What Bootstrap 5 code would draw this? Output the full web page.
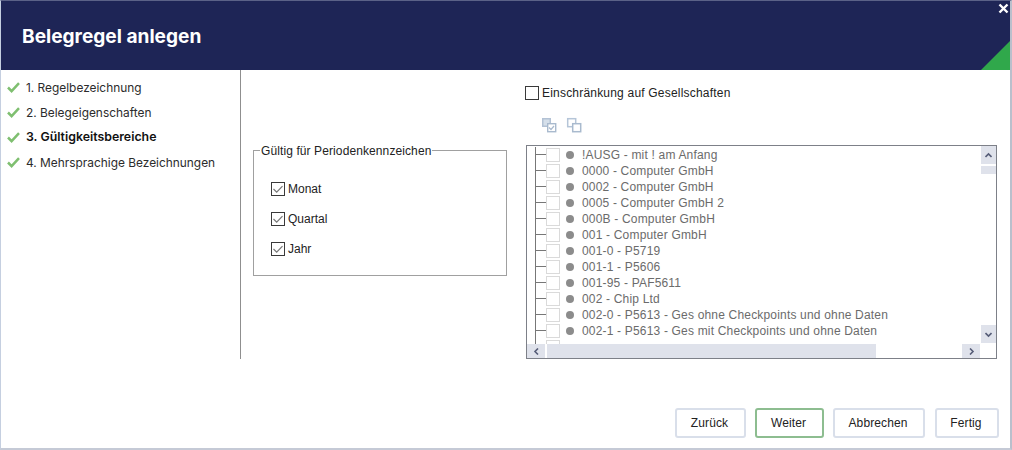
<!DOCTYPE html>
<html lang="de">
<head>
<meta charset="utf-8">
<link href="https://cdn.jsdelivr.net/npm/bootstrap@5.3.0/dist/css/bootstrap.min.css" rel="stylesheet">
<style>
html,body{margin:0;height:450px;overflow:hidden;background:#fff}
body{font-family:"Liberation Sans",Arial,sans-serif;font-size:12px;color:#222}
.dlg{width:1012px;height:450px;border:1px solid #c5cfe0;border-top-color:#5b6287;border-right:2px solid #b9bfcc;border-bottom:2px solid #c5cad6;background:#fff;display:flex;flex-direction:column}
.dlg-head{height:69px;background:#1e2556;flex:none;display:flex;align-items:center;padding-left:21px;overflow:hidden;position:relative}
.dlg-title{font-family:"Inter","Liberation Sans",sans-serif;font-weight:700;font-size:19.1px;color:#fff;margin:0;line-height:1;padding-top:2px}
.dlg-close{position:absolute;right:1px;top:2px;width:11px;height:11px;display:block}
.dlg-tri{position:absolute;right:0;bottom:0;width:29px;height:29px;display:block}
.dlg-body{height:289px;flex:none;display:flex}
.steps{width:240px;flex:none;border-right:1px solid #8f8f8f;padding-top:5px;height:289px;font-family:"Inter","Liberation Sans",sans-serif;font-size:11.9px;color:#2c2c2c}
.step{height:25px;display:flex;align-items:center;padding-left:6px;gap:6px}
.step.now{font-weight:600;color:#111;font-size:12.35px}
.mainp{flex:1;display:flex;min-width:0}
.leftp{width:272px;flex:none;padding:80px 0 0 12px}
.grpbox{width:254px;height:126px;border:1px solid #a0a0a0;margin:0;padding:0;display:flex;flex-direction:column;position:relative}
.grpcap{position:absolute;left:6px;top:-7px;background:#fff;padding:0 1px;font-size:12px;line-height:14px;color:#222;letter-spacing:.1px}
.opts{padding-top:30px;padding-left:17px;display:flex;flex-direction:column;gap:14px}
.opt{display:flex;align-items:center;gap:3px;height:16px;line-height:16px;font-size:12px}
.cbx{width:14px;height:14px;flex:none;display:block}
.rightp{flex:1;padding:16px 0 0 13px;min-width:0}
.restrict{display:flex;align-items:center;gap:3px;height:14px;line-height:14px;font-size:12px;margin:0 0 17px -1px;letter-spacing:.2px}
.tools{display:flex;gap:9px;height:16px;padding-left:15px;margin-bottom:12px}
.tools svg{width:16px;height:16px;display:block}
.treebox{width:471px;height:214px;border:1px solid #7d8088;position:relative;overflow:hidden;background:#fff}
.rows{padding-top:1px}
.trow{height:16px;display:flex;align-items:center;color:#6b6b6b;font-size:12px;line-height:16px;white-space:nowrap;letter-spacing:.18px}
.lnk{width:11px;height:16px;flex:none;margin-left:8px;position:relative;border-left:1px solid #777}
.lnk::after{content:"";position:absolute;left:0;right:0;top:7px;border-top:1px solid #777}
.bx{width:14px;height:14px;border:1px solid #dadada;flex:none;background:#fff}
.dot{width:8px;height:8px;border-radius:50%;background:#8c8c8c;flex:none;margin:0 8px 0 6px}
.sb{background:#dfe2eb;position:absolute;display:flex;align-items:center;justify-content:center}
.sb svg{width:7px;height:7px;display:block}
.sb-up{right:0;top:0;width:15px;height:18px}
.sb-thumb{right:0;top:20px;width:15px;height:8px}
.sb-dn{right:0;bottom:15px;width:15px;height:18px}
.sb-lf{left:0;bottom:0;width:18px;height:14px}
.sb-hthumb{left:20px;bottom:0;width:329px;height:14px}
.sb-rt{right:16px;bottom:0;width:18px;height:14px}
.sb-fill{right:0;left:0;bottom:0;height:14px;background:#fff}
.foot{flex:1;display:flex;justify-content:flex-end;align-items:flex-start;gap:9px;padding:49px 11px 0 0}
.fbtn{height:30px;padding:0 2px 0 0;border:2px solid #d9dfea;border-radius:3px;background:#fff;font-family:"Liberation Sans",Arial,sans-serif;font-size:12px;color:#222;line-height:1;letter-spacing:.1px;box-shadow:none}
.fbtn:hover{background:#fff;color:#222;border-color:#d9dfea}
.fbtn.def{border-color:#8dbd90}
.w-z{width:71px}.w-w{width:69px}.w-a{width:92px}.w-f{width:64px;margin-left:1px}
</style>
</head>
<body>
<div class="dlg">
  <div class="dlg-head">
    <h1 class="dlg-title">Belegregel anlegen</h1>
    <svg class="dlg-close" viewBox="0 0 11 11"><path d="M1.5 1.5l8 8M9.5 1.5l-8 8" stroke="#fff" stroke-width="2.4"/></svg>
    <svg class="dlg-tri" viewBox="0 0 29 29"><polygon points="29,0 29,29 0,29" fill="#30a84b"/></svg>
  </div>
  <div class="dlg-body">
    <div class="steps">
      <div class="step"><svg width="13" height="11" viewBox="0 0 13 11"><path d="M1 5.5l3.6 3.6L12 1.2" fill="none" stroke="#7fbf70" stroke-width="2.5"/></svg><span>1. Regelbezeichnung</span></div>
      <div class="step"><svg width="13" height="11" viewBox="0 0 13 11"><path d="M1 5.5l3.6 3.6L12 1.2" fill="none" stroke="#7fbf70" stroke-width="2.5"/></svg><span>2. Belegeigenschaften</span></div>
      <div class="step now"><svg width="13" height="11" viewBox="0 0 13 11"><path d="M1 5.5l3.6 3.6L12 1.2" fill="none" stroke="#7fbf70" stroke-width="2.5"/></svg><span>3. Gültigkeitsbereiche</span></div>
      <div class="step"><svg width="13" height="11" viewBox="0 0 13 11"><path d="M1 5.5l3.6 3.6L12 1.2" fill="none" stroke="#7fbf70" stroke-width="2.5"/></svg><span>4. Mehrsprachige Bezeichnungen</span></div>
    </div>
    <div class="mainp">
      <div class="leftp">
        <div class="grpbox">
          <span class="grpcap">Gültig für Periodenkennzeichen</span>
          <div class="opts">
            <div class="opt"><svg class="cbx" viewBox="0 0 14 14"><rect x=".5" y=".5" width="13" height="13" fill="#fff" stroke="#3a3a3a"/><path d="M2.5 7l3.2 3.2 5.8-6" fill="none" stroke="#777" stroke-width="1.2"/></svg><span>Monat</span></div>
            <div class="opt"><svg class="cbx" viewBox="0 0 14 14"><rect x=".5" y=".5" width="13" height="13" fill="#fff" stroke="#3a3a3a"/><path d="M2.5 7l3.2 3.2 5.8-6" fill="none" stroke="#777" stroke-width="1.2"/></svg><span>Quartal</span></div>
            <div class="opt"><svg class="cbx" viewBox="0 0 14 14"><rect x=".5" y=".5" width="13" height="13" fill="#fff" stroke="#3a3a3a"/><path d="M2.5 7l3.2 3.2 5.8-6" fill="none" stroke="#777" stroke-width="1.2"/></svg><span>Jahr</span></div>
          </div>
        </div>
      </div>
      <div class="rightp">
        <div class="restrict"><svg class="cbx" viewBox="0 0 14 14"><rect x=".5" y=".5" width="13" height="13" fill="#fff" stroke="#3a3a3a"/></svg><span>Einschränkung auf Gesellschaften</span></div>
        <div class="tools">
          <svg viewBox="0 0 16 16"><rect x="1" y="1" width="9" height="9" fill="#b3c2d5"/><rect x="2.5" y="2.5" width="6" height="6" fill="#d5dfea"/><rect x="6.7" y="6.7" width="8" height="8" fill="#fff" stroke="#a9bace" stroke-width="1.4"/><path d="M8 10.5l2 2 3-3.5" fill="none" stroke="#a9bace" stroke-width="1.2"/></svg>
          <svg viewBox="0 0 16 16"><rect x="1.7" y="1.7" width="8" height="8" fill="#fff" stroke="#b5c5d8" stroke-width="1.5"/><rect x="6.7" y="6.7" width="8" height="8" fill="#fff" stroke="#a9bace" stroke-width="1.5"/></svg>
        </div>
        <div class="treebox">
          <div class="rows">
            <div class="trow"><span class="lnk"></span><span class="bx"></span><span class="dot"></span>!AUSG - mit ! am Anfang</div>
            <div class="trow"><span class="lnk"></span><span class="bx"></span><span class="dot"></span>0000 - Computer GmbH</div>
            <div class="trow"><span class="lnk"></span><span class="bx"></span><span class="dot"></span>0002 - Computer GmbH</div>
            <div class="trow"><span class="lnk"></span><span class="bx"></span><span class="dot"></span>0005 - Computer GmbH 2</div>
            <div class="trow"><span class="lnk"></span><span class="bx"></span><span class="dot"></span>000B - Computer GmbH</div>
            <div class="trow"><span class="lnk"></span><span class="bx"></span><span class="dot"></span>001 - Computer GmbH</div>
            <div class="trow"><span class="lnk"></span><span class="bx"></span><span class="dot"></span>001-0 - P5719</div>
            <div class="trow"><span class="lnk"></span><span class="bx"></span><span class="dot"></span>001-1 - P5606</div>
            <div class="trow"><span class="lnk"></span><span class="bx"></span><span class="dot"></span>001-95 - PAF5611</div>
            <div class="trow"><span class="lnk"></span><span class="bx"></span><span class="dot"></span>002 - Chip Ltd</div>
            <div class="trow"><span class="lnk"></span><span class="bx"></span><span class="dot"></span>002-0 - P5613 - Ges ohne Checkpoints und ohne Daten</div>
            <div class="trow"><span class="lnk"></span><span class="bx"></span><span class="dot"></span>002-1 - P5613 - Ges mit Checkpoints und ohne Daten</div>
            <div class="trow"><span class="lnk"></span><span class="bx"></span></div>
          </div>
          <div class="sb-fill sb"></div>
          <div class="sb sb-up"><svg viewBox="0 0 7 7"><path d="M.5 5L3.5 2l3 3" fill="none" stroke="#565d78" stroke-width="1.6"/></svg></div>
          <div class="sb sb-thumb"></div>
          <div class="sb sb-dn"><svg viewBox="0 0 7 7"><path d="M.5 2l3 3 3-3" fill="none" stroke="#565d78" stroke-width="1.6"/></svg></div>
          <div class="sb sb-lf"><svg viewBox="0 0 7 7"><path d="M5 .5L2 3.5l3 3" fill="none" stroke="#565d78" stroke-width="1.6"/></svg></div>
          <div class="sb sb-hthumb"></div>
          <div class="sb sb-rt"><svg viewBox="0 0 7 7"><path d="M2 .5l3 3-3 3" fill="none" stroke="#565d78" stroke-width="1.6"/></svg></div>
        </div>
      </div>
    </div>
  </div>
  <div class="foot">
    <button type="button" class="btn fbtn w-z">Zurück</button>
    <button type="button" class="btn fbtn def w-w">Weiter</button>
    <button type="button" class="btn fbtn w-a">Abbrechen</button>
    <button type="button" class="btn fbtn w-f">Fertig</button>
  </div>
</div>
<script src="https://cdn.jsdelivr.net/npm/bootstrap@5.3.0/dist/js/bootstrap.bundle.min.js"></script>
</body>
</html>
